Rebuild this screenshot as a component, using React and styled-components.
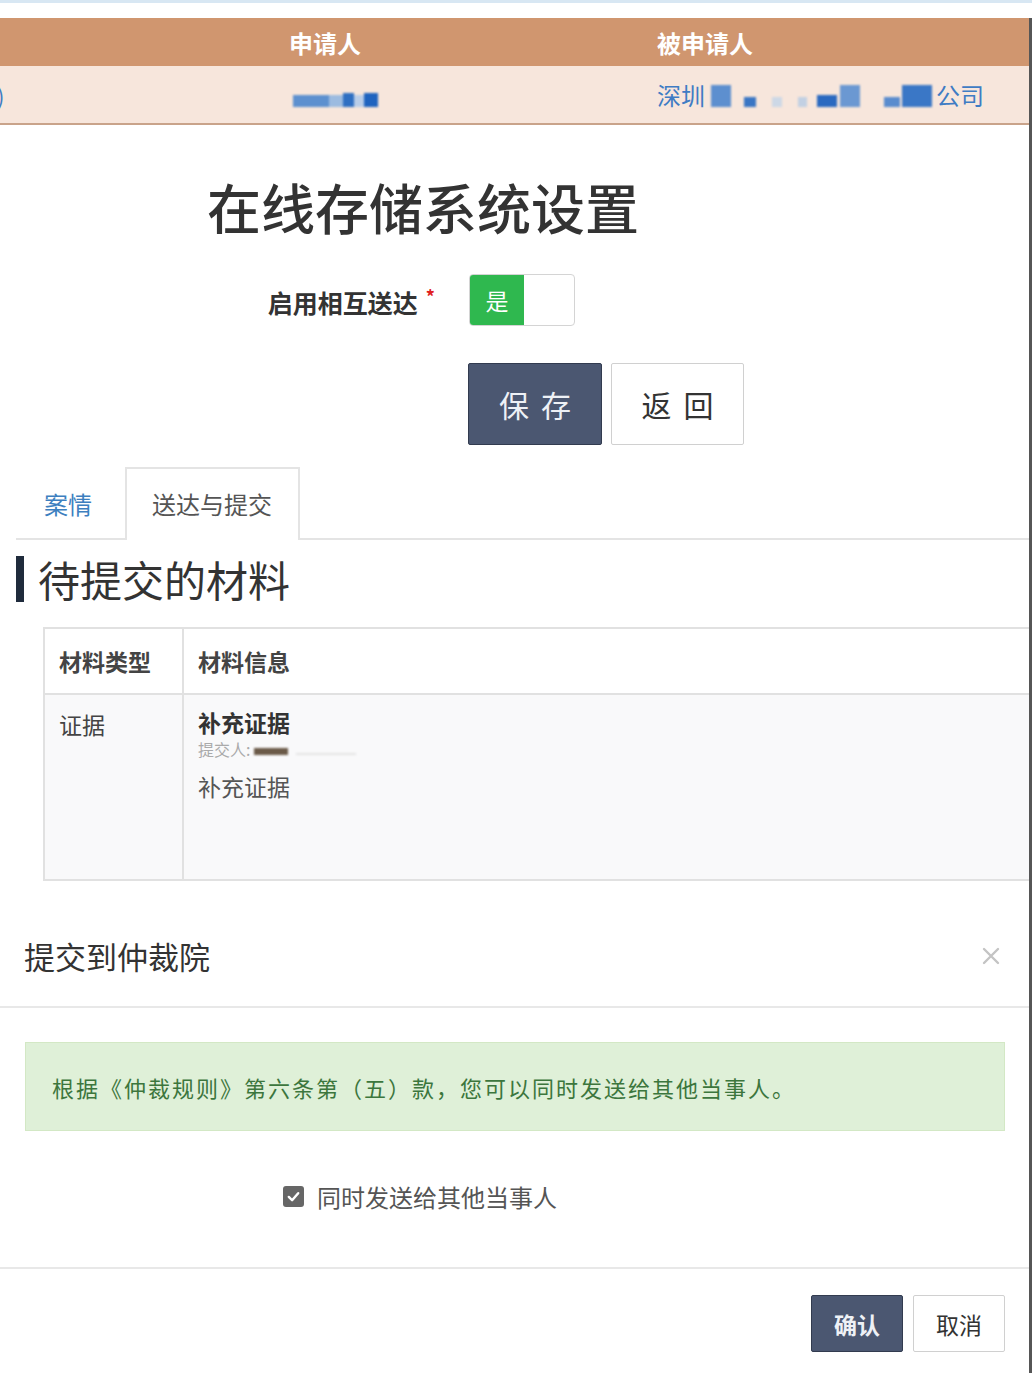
import styled, { createGlobalStyle } from "styled-components";

const GlobalStyle = createGlobalStyle`
  body {
    margin: 0;
    background: #fff;
    font-family: "Noto Sans CJK SC", "Noto Sans", sans-serif;
    color: #333;
  }
`;

const Page = styled.div`
  width: 1032px;
  min-height: 1370px;
  background: #fff;
  border-top: 3px solid #d8e7f3;
`;

const Frame = styled.div`
  margin-top: 15px;
  border-right: 3px solid #565656;
  min-height: 1355px;
`;

const PartyHeader = styled.div`
  display: grid;
  grid-template-columns: 289px 368px 1fr;
  align-items: center;
  height: 48px;
  background: #d0966f;
  color: #fff;
  font-size: 24px;
  font-weight: 700;
`;

const PartyRow = styled.div`
  display: grid;
  grid-template-columns: 289px 368px 1fr;
  align-items: center;
  height: 57px;
  background: #f7e6dc;
  border-bottom: 2px solid #c9a38a;
  color: #3f7cc4;
  font-size: 24px;
`;

const EdgeMark = styled.span`
  margin-left: -3px;
  color: #3f7cc4;
  font-size: 22px;
`;

const Redacted = styled.span`
  display: inline-flex;
  align-items: flex-end;
  height: 24px;
  filter: blur(0.8px);
  vertical-align: middle;
`;

const Blot = styled.span`
  display: inline-block;
  width: ${(p) => p.w}px;
  height: ${(p) => p.h}px;
  margin-left: ${(p) => p.gap || 0}px;
  background: ${(p) => p.c};
`;

const Company = styled.div`
  display: flex;
  align-items: center;
  gap: 4px;
`;

const Settings = styled.section`
  padding-top: 50px;
`;

const Title = styled.h1`
  margin: 0 0 35px 207px;
  font-size: 54px;
  line-height: 64px;
  font-weight: 500;
  color: #333;
`;

const FormRow = styled.div`
  display: grid;
  grid-template-columns: 435px auto;
  column-gap: 34px;
  align-items: center;
  justify-content: start;
  margin-bottom: ${(p) => p.mb || 0}px;
`;

const Label = styled.label`
  text-align: right;
  font-size: 25px;
  font-weight: 700;
  color: #333;
  padding-top: 4px;
`;

const Required = styled.sup`
  color: #e02020;
  font-size: 18px;
  margin-left: 8px;
`;

const Toggle = styled.div`
  display: flex;
  width: 104px;
  height: 50px;
  border: 1px solid #d4d4d4;
  border-radius: 4px;
  overflow: hidden;
  background: #fff;
`;

const ToggleOn = styled.span`
  display: flex;
  align-items: center;
  justify-content: center;
  width: 54px;
  background: #2fb84f;
  color: #fff;
  font-size: 23px;
`;

const Actions = styled.div`
  display: flex;
  gap: 9px;
  margin-left: -1px;
`;

const Button = styled.button`
  display: flex;
  align-items: center;
  justify-content: center;
  width: ${(p) => p.w}px;
  height: ${(p) => p.h}px;
  padding: 0;
  font-family: inherit;
  font-size: ${(p) => p.fs}px;
  letter-spacing: ${(p) => p.ls || 0}px;
  text-indent: ${(p) => p.ls || 0}px;
  border-radius: 2px;
  border: 1px solid ${(p) => (p.primary ? "#323b4f" : "#d0d0d0")};
  background: ${(p) => (p.primary ? "#4b5771" : "#fff")};
  color: ${(p) => (p.primary ? "#eef1f6" : "#333")};
  font-weight: ${(p) => p.fw || 400};
`;

const Tabs = styled.div`
  display: flex;
  align-items: flex-end;
  margin: 22px 0 0 16px;
  border-bottom: 2px solid #e4e4e4;
`;

const Tab = styled.div`
  height: 69px;
  display: flex;
  align-items: center;
  padding: 0 ${(p) => (p.active ? 26 : 31)}px 0 ${(p) => (p.active ? 25 : 26)}px;
  font-size: 24px;
  color: ${(p) => (p.active ? "#555" : "#3d7fbf")};
  background: #fff;
  border: 2px solid ${(p) => (p.active ? "#e4e4e4" : "transparent")};
  border-bottom: none;
  margin-bottom: ${(p) => (p.active ? -2 : 0)}px;
  padding-bottom: ${(p) => (p.active ? 2 : 0)}px;
`;

const SectionTitle = styled.h2`
  margin: 16px 0 0 16px;
  padding-left: 14px;
  border-left: 8px solid #1f2b3c;
  font-size: 42px;
  line-height: 46px;
  font-weight: 400;
  color: #333;
`;

const Table = styled.div`
  display: grid;
  grid-template-columns: 137px 1fr;
  grid-template-rows: 64px 186px;
  margin: 25px 0 0 43px;
  border: 2px solid #e1e1e1;
  border-right: none;
`;

const Cell = styled.div`
  padding: ${(p) => (p.head ? "0 14px" : "12px 14px")};
  display: flex;
  flex-direction: column;
  justify-content: ${(p) => (p.head ? "center" : "flex-start")};
  font-size: 23px;
  font-weight: ${(p) => (p.head ? 700 : 400)};
  color: #444;
  background: ${(p) => (p.head ? "#fff" : "#f9f9fa")};
  border-left: ${(p) => (p.divider ? "2px solid #e1e1e1" : "none")};
  border-top: ${(p) => (p.body ? "2px solid #e1e1e1" : "none")};
`;

const ItemTitle = styled.div`
  font-weight: 700;
  color: #333;
  line-height: 30px;
`;

const Submitter = styled.div`
  display: flex;
  align-items: center;
  height: 24px;
  font-size: 16px;
  color: #aaa;
`;

const ItemNote = styled.div`
  margin-top: 10px;
  color: #555;
  line-height: 30px;
`;

const Modal = styled.section`
  margin-top: 30px;
  background: #fff;
`;

const ModalHeader = styled.div`
  display: flex;
  align-items: center;
  justify-content: space-between;
  height: 89px;
  padding: 0 29px 6px 24px;
  border-bottom: 2px solid #e8e8e8;
`;

const ModalTitle = styled.h3`
  margin: 0;
  font-size: 31px;
  font-weight: 400;
  color: #333;
`;

const ModalBody = styled.div`
  padding: 34px 24px 51px 25px;
`;

const Alert = styled.div`
  display: flex;
  align-items: center;
  height: 87px;
  padding-left: 26px;
  background: #dff0d8;
  border: 1px solid #d3e8c5;
  color: #3c763d;
  font-size: 22px;
  letter-spacing: 2px;
`;

const CheckRow = styled.label`
  display: flex;
  align-items: center;
  gap: 13px;
  height: 40px;
  margin: 45px 0 0 258px;
  font-size: 24px;
  color: #555;
`;

const CheckBox = styled.span`
  display: flex;
  align-items: center;
  justify-content: center;
  width: 21px;
  height: 21px;
  border-radius: 3px;
  background: #666;
`;

const ModalFooter = styled.div`
  display: flex;
  justify-content: flex-end;
  gap: 10px;
  padding: 26px 24px 20px 0;
  border-top: 2px solid #e8e8e8;
`;

const App = () => {
  return (
    <Page>
      <GlobalStyle />
      <Frame>
        <PartyHeader>
          <span />
          <span>申请人</span>
          <span>被申请人</span>
        </PartyHeader>
        <PartyRow>
          <EdgeMark>)</EdgeMark>
          <Redacted style={{ marginLeft: 4 }}>
            <Blot w={36} h={12} c="#5d90cf" />
            <Blot w={14} h={12} c="#9cbbe0" />
            <Blot w={11} h={14} c="#2f6fc2" />
            <Blot w={10} h={12} c="#b9cde8" />
            <Blot w={14} h={14} c="#1f63bf" />
          </Redacted>
          <Company>
            <span>深圳</span>
            <Redacted>
              <Blot w={20} h={22} c="#5d8fcf" gap={2} />
              <Blot w={12} h={10} c="#3a76c4" gap={13} />
              <Blot w={10} h={10} c="#cdd8e6" gap={16} />
              <Blot w={9} h={10} c="#c2d0e3" gap={16} />
              <Blot w={20} h={12} c="#2a69c0" gap={10} />
              <Blot w={20} h={22} c="#6b98d2" gap={3} />
              <Blot w={16} h={10} c="#5a8cce" gap={24} />
              <Blot w={30} h={22} c="#3a77c6" gap={2} />
            </Redacted>
            <span>公司</span>
          </Company>
        </PartyRow>

        <Settings>
          <Title>在线存储系统设置</Title>
          <FormRow mb={37}>
            <Label>
              启用相互送达<Required>*</Required>
            </Label>
            <Toggle>
              <ToggleOn>是</ToggleOn>
            </Toggle>
          </FormRow>
          <FormRow>
            <span />
            <Actions>
              <Button primary w={134} h={82} fs={30} ls={12}>
                保存
              </Button>
              <Button w={133} h={82} fs={30} ls={12}>
                返回
              </Button>
            </Actions>
          </FormRow>
        </Settings>

        <Tabs>
          <Tab>案情</Tab>
          <Tab active>送达与提交</Tab>
        </Tabs>

        <SectionTitle>待提交的材料</SectionTitle>

        <Table>
          <Cell head>材料类型</Cell>
          <Cell head divider>
            材料信息
          </Cell>
          <Cell body>证据</Cell>
          <Cell body divider>
            <ItemTitle>补充证据</ItemTitle>
            <Submitter>
              <span>提交人:</span>
              <Redacted style={{ height: 12, marginLeft: 4 }}>
                <Blot w={34} h={7} c="#6b5a48" />
                <Blot w={60} h={2} c="#e4e4e4" gap={8} />
              </Redacted>
            </Submitter>
            <ItemNote>补充证据</ItemNote>
          </Cell>
        </Table>

        <Modal>
          <ModalHeader>
            <ModalTitle>提交到仲裁院</ModalTitle>
            <svg width="18" height="18" viewBox="0 0 18 18">
              <path
                d="M2 2 L16 16 M16 2 L2 16"
                stroke="#c4c4c4"
                strokeWidth="2.4"
                strokeLinecap="round"
              />
            </svg>
          </ModalHeader>
          <ModalBody>
            <Alert>根据《仲裁规则》第六条第（五）款，您可以同时发送给其他当事人。</Alert>
            <CheckRow>
              <CheckBox>
                <svg width="15" height="15" viewBox="0 0 16 16">
                  <path
                    d="M3 8.5 L6.5 12 L13 4.5"
                    fill="none"
                    stroke="#fff"
                    strokeWidth="2.6"
                    strokeLinecap="round"
                    strokeLinejoin="round"
                  />
                </svg>
              </CheckBox>
              同时发送给其他当事人
            </CheckRow>
          </ModalBody>
          <ModalFooter>
            <Button primary w={92} h={57} fs={23} fw={700}>
              确认
            </Button>
            <Button w={92} h={57} fs={23}>
              取消
            </Button>
          </ModalFooter>
        </Modal>
      </Frame>
    </Page>
  );
};

export default App;
